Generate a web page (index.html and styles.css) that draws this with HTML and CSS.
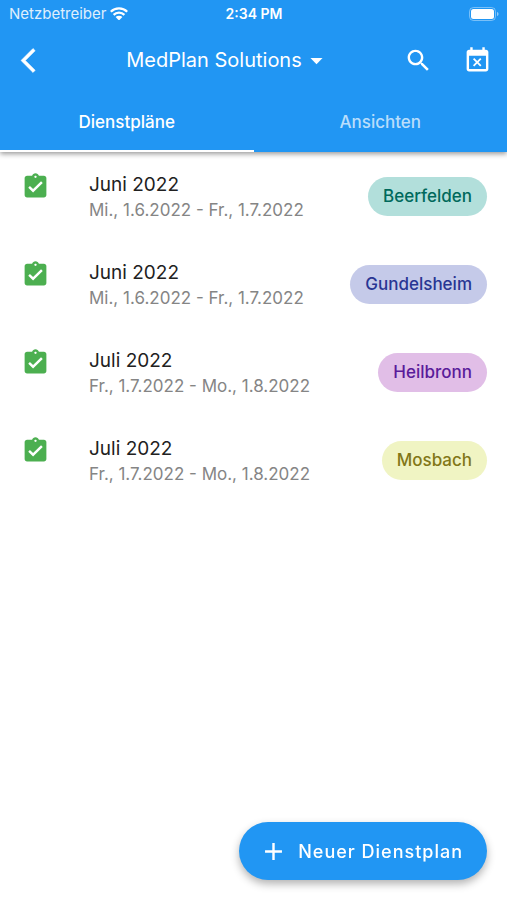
FILE: index.html
```html
<!DOCTYPE html>
<html lang="de">
<head>
<meta charset="utf-8">
<meta name="viewport" content="width=device-width, initial-scale=1">
<title>MedPlan Solutions</title>
<link rel="stylesheet" href="styles.css">
</head>
<body>
<svg class="sprite" aria-hidden="true">
  <symbol id="task" viewBox="0 0 24 24">
    <path fill-rule="evenodd" d="M19 3h-4.180C14.400 1.840 13.300 1 12 1s-2.400.84-2.820 2H5c-1.100 0-2 .9-2 2v14c0 1.100.9 2 2 2h14c1.100 0 2-.9 2-2V5c0-1.100-.9-2-2-2zm-7 0c.55 0 1 .45 1 1s-.45 1-1 1-1-.45-1-1 .45-1 1-1zm-2 14l-4-4 1.410-1.410L10 14.170l6.590-6.590L18 9l-8 8z"/>
  </symbol>
</svg>
<header class="header">
  <div class="status">
    <div class="carrier">
      <span>Netzbetreiber</span>
      <svg class="wifi" viewBox="0 0 18 13" aria-hidden="true">
        <path d="M.8 4.800 A11.500 11.500 0 0 1 17.200 4.800M3.600 7.900 A7.600 7.600 0 0 1 14.400 7.900" fill="none" stroke="currentColor" stroke-width="2.300"/>
        <path d="M9 13.500 L5.600 10.100 A4.800 4.800 0 0 1 12.400 10.100 Z" fill="currentColor"/>
      </svg>
    </div>
    <span class="time">2:34 PM</span>
    <svg class="battery" viewBox="0 0 30 14" aria-hidden="true">
      <rect x=".5" y=".5" width="26" height="13" rx="4" fill="none" stroke="currentColor" opacity=".4"/>
      <rect x="2" y="2" width="23" height="10" rx="2.500" fill="currentColor"/>
      <path d="M28 5v4c2-.6 2-3.400 0-4z" fill="currentColor" opacity=".5"/>
    </svg>
  </div>
  <div class="appbar">
    <button class="icon-button" type="button" aria-label="Zurück">
      <svg class="icon back" viewBox="0 0 24 24"><path d="M17.510 3.870L15.730 2.100 5.840 12l9.900 9.900 1.770-1.770L9.380 12l8.130-8.130z"/></svg>
    </button>
    <button class="team" type="button">
      <span>MedPlan Solutions</span>
      <svg class="icon" viewBox="0 0 24 24" aria-hidden="true"><path d="M7 10l5 5 5-5z"/></svg>
    </button>
    <div class="actions">
      <button class="icon-button" type="button" aria-label="Suchen">
        <svg class="icon" viewBox="0 0 24 24"><path d="M15.500 14h-.79l-.28-.27C15.410 12.590 16 11.110 16 9.500 16 5.910 13.090 3 9.500 3S3 5.910 3 9.500 5.910 16 9.500 16c1.610 0 3.090-.59 4.230-1.570l.27.28v.79l5 4.990L20.490 19l-4.990-5zm-6 0C7.010 14 5 11.990 5 9.500S7.010 5 9.500 5 14 7.010 14 9.500 11.990 14 9.500 14z"/></svg>
      </button>
      <button class="icon-button" type="button" aria-label="Abwesenheiten">
        <svg class="icon" viewBox="0 0 24 24"><path d="M9.310 17l2.440-2.440L14.190 17l1.060-1.060-2.440-2.440 2.440-2.440L14.190 10l-2.440 2.440L9.310 10l-1.060 1.060 2.440 2.440-2.440 2.440L9.310 17zM19 3h-1V1h-2v2H8V1H6v2H5c-1.110 0-1.990.9-1.990 2L3 19c0 1.100.89 2 2 2h14c1.100 0 2-.9 2-2V5c0-1.100-.9-2-2-2zm0 16H5V8h14v11z"/></svg>
      </button>
    </div>
  </div>
  <nav class="tabs">
    <a class="tab active" href="#dienstplaene" aria-current="page">Dienstpläne</a>
    <a class="tab" href="#ansichten">Ansichten</a>
  </nav>
</header>
<main>
  <ul class="plans" id="dienstplaene">
    <li class="plan">
      <svg class="icon done" aria-hidden="true"><use href="#task"/></svg>
      <div class="text"><div class="name">Juni 2022</div><div class="dates">Mi., 1.6.2022 - Fr., 1.7.2022</div></div>
      <span class="chip teal">Beerfelden</span>
    </li>
    <li class="plan">
      <svg class="icon done" aria-hidden="true"><use href="#task"/></svg>
      <div class="text"><div class="name">Juni 2022</div><div class="dates">Mi., 1.6.2022 - Fr., 1.7.2022</div></div>
      <span class="chip indigo">Gundelsheim</span>
    </li>
    <li class="plan">
      <svg class="icon done" aria-hidden="true"><use href="#task"/></svg>
      <div class="text"><div class="name">Juli 2022</div><div class="dates">Fr., 1.7.2022 - Mo., 1.8.2022</div></div>
      <span class="chip purple">Heilbronn</span>
    </li>
    <li class="plan">
      <svg class="icon done" aria-hidden="true"><use href="#task"/></svg>
      <div class="text"><div class="name">Juli 2022</div><div class="dates">Fr., 1.7.2022 - Mo., 1.8.2022</div></div>
      <span class="chip lime">Mosbach</span>
    </li>
  </ul>
</main>
<button class="fab" type="button">
  <svg class="icon" viewBox="0 0 24 24" aria-hidden="true"><path d="M19 13h-6v6h-2v-6H5v-2h6V5h2v6h6v2z"/></svg>
  <span>Neuer Dienstplan</span>
</button>
</body>
</html>
```
FILE: styles.css
```css
* {
  box-sizing: border-box;
}

body {
  margin: 0;
  min-height: 100vh;
  background: #fff;
  color: #212121;
  font-family: Inter, "Liberation Sans", sans-serif;
  font-size: 17px;
}

button {
  padding: 0;
  border: 0;
  background: none;
  color: inherit;
  font: inherit;
  cursor: pointer;
}

.sprite {
  display: none;
}

.icon {
  display: block;
  flex: none;
  width: 29px;
  height: 29px;
  fill: currentColor;
}

.back {
  stroke: currentColor;
  stroke-width: 0.5;
}

.header {
  background: #2196f3;
  color: #fff;
  box-shadow: 0 2px 5px rgba(0, 0, 0, 0.4);
}

.status {
  display: grid;
  grid-template-columns: 1fr auto 1fr;
  align-items: center;
  height: 27px;
  padding: 0 8px 0 9px;
  font-size: 15px;
}

.carrier {
  display: flex;
  align-items: center;
  gap: 4px;
}

.carrier span {
  opacity: 0.85;
}

.wifi {
  width: 18px;
  height: 13px;
}

.time {
  font-size: 14px;
  font-weight: 600;
}

.battery {
  justify-self: end;
  width: 30px;
  height: 14px;
}

.appbar {
  display: flex;
  align-items: center;
  justify-content: space-between;
  height: 66px;
  padding: 0 15px 0 14px;
}

.team {
  display: flex;
  align-items: center;
  margin-left: 10px;
  font-size: 20px;
}

.actions {
  display: flex;
  gap: 30px;
}

.tabs {
  display: grid;
  grid-template-columns: 1fr 1fr;
  height: 59px;
}

.tab {
  display: flex;
  align-items: center;
  justify-content: center;
  border-bottom: 2px solid transparent;
  color: rgba(255, 255, 255, 0.7);
  font-weight: 500;
  text-decoration: none;
}

.tab.active {
  border-color: #fff;
  color: #fff;
}

.plans {
  margin: 0;
  padding: 0;
  list-style: none;
}

.plan {
  display: flex;
  align-items: center;
  height: 88px;
  padding: 0 20px 0 21px;
}

.done {
  align-self: flex-start;
  margin-top: 20px;
  color: #4caf50;
}

.text {
  flex: 1;
  align-self: flex-start;
  margin: 20px 16px 0 39px;
}

.name {
  font-size: 19px;
  line-height: 25px;
}

.dates {
  color: #858585;
  line-height: 26px;
}

.chip {
  padding: 0 15px;
  border-radius: 20px;
  font-weight: 500;
  line-height: 39px;
}

.teal {
  background: #b2dfdb;
  color: #00695c;
}

.indigo {
  background: #c5cae9;
  color: #283593;
}

.purple {
  background: #e1bee7;
  color: #5a1b9a;
}

.lime {
  background: #f0f4c3;
  color: #827717;
}

.fab {
  position: fixed;
  right: 20px;
  bottom: 20px;
  display: flex;
  align-items: center;
  gap: 10px;
  height: 58px;
  padding: 0 24px 0 20px;
  border-radius: 29px;
  background: #2196f3;
  box-shadow: 0 4px 8px rgba(0, 0, 0, 0.3);
  color: #fff;
  font-size: 18px;
  font-weight: 500;
  letter-spacing: 1px;
}
```
